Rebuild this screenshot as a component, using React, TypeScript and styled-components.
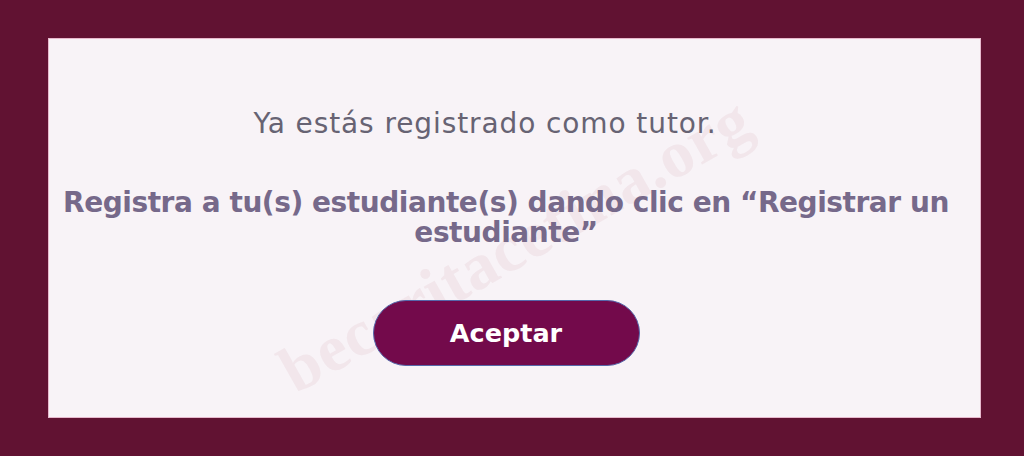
import React from 'react';
import styled, { createGlobalStyle } from 'styled-components';

const GlobalStyle = createGlobalStyle`
  html, body {
    margin: 0;
    padding: 0;
    background: #611232;
  }
`;

const Page = styled.main`
  width: 1024px;
  height: 456px;
  box-sizing: border-box;
  padding: 38px 43px 38px 48px;
  background: #611232;
  font-family: 'DejaVu Sans', 'Open Sans', sans-serif;
`;

const Card = styled.section`
  position: relative;
  overflow: hidden;
  height: 100%;
  box-sizing: border-box;
  background: #f8f3f7;
  border: 1px solid #e7b9cd;
  display: flex;
  flex-direction: column;
  align-items: center;
  padding: 68px 17px 0 0;
`;

const Notice = styled.p`
  position: relative;
  margin: 0 42px 0 0;
  font-size: 28px;
  line-height: 34px;
  color: #676373;
  letter-spacing: 0.9px;
`;

const Instruction = styled.p`
  position: relative;
  margin: 47px 0 0;
  width: 900px;
  text-align: center;
  font-size: 28px;
  line-height: 30px;
  font-weight: 800;
  color: #76698a;
  letter-spacing: -0.45px;
`;

const AcceptButton = styled.button`
  position: relative;
  margin-top: 52px;
  width: 267px;
  height: 66px;
  border-radius: 33px;
  border: 1.5px solid #5668ab;
  background: #730a4b;
  color: #ffffff;
  font-family: inherit;
  font-size: 25.5px;
  font-weight: 700;
  cursor: pointer;
`;

const Watermark = styled.span`
  position: absolute;
  left: 236px;
  top: 298px;
  transform: rotate(-29.5deg);
  transform-origin: left center;
  font-family: 'Liberation Serif', serif;
  font-weight: 700;
  font-size: 66px;
  letter-spacing: 1px;
  color: rgba(225, 195, 200, 0.26);
  pointer-events: none;
  white-space: nowrap;
`;

export default function App() {
  return (
    <>
      <GlobalStyle />
      <Page>
        <Card>
          <Watermark>becaritacetina.org</Watermark>
          <Notice>Ya estás registrado como tutor.</Notice>
          <Instruction>
            Registra a tu(s) estudiante(s) dando clic en “Registrar un estudiante”
          </Instruction>
          <AcceptButton>Aceptar</AcceptButton>
        </Card>
      </Page>
    </>
  );
}
